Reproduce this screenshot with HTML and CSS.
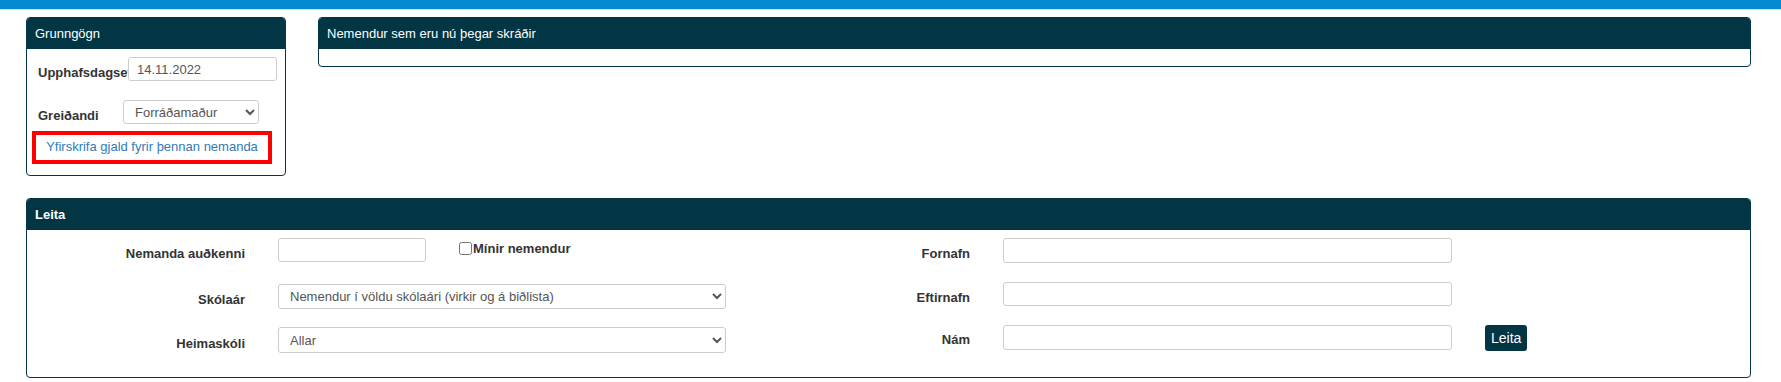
FILE: index.html
```html
<!DOCTYPE html>
<html lang="is">
<head>
    <meta charset="UTF-8">
    <meta name="viewport" content="width=device-width, initial-scale=1.0">
    <title>Skráning nemenda</title>
    <link rel="stylesheet" href="styles.css">
</head>
<body>

    <div class="topbar"></div>

    <div class="page">
        <div class="top-row">
            <section class="panel panel-base">
                <div class="panel-heading">Grunngögn</div>
                <div class="panel-body">
                    <div class="base-row">
                        <label class="base-label base-label-date" for="startdate">Upphafsdagsetning</label>
                        <input type="text" id="startdate" class="field field-date" value="14.11.2022">
                    </div>
                    <div class="base-row base-row-payer">
                        <label class="base-label base-label-payer" for="payer">Greiðandi</label>
                        <select id="payer" class="field field-payer">
                            <option>Forráðamaður</option>
                            <option>Nemandi</option>
                        </select>
                    </div>
                    <div class="override-box">
                        <a href="#" class="override-link">Yfirskrifa gjald fyrir þennan nemanda</a>
                    </div>
                </div>
            </section>

            <section class="panel panel-list">
                <div class="panel-heading">Nemendur sem eru nú þegar skráðir</div>
                <div class="panel-body"></div>
            </section>
        </div>

        <section class="panel panel-search">
            <div class="panel-heading panel-heading-bold">Leita</div>
            <div class="panel-body search-body">
                <div class="search-left">
                    <div class="search-row row-a">
                        <label class="search-label" for="sid">Nemanda auðkenni</label>
                        <input type="text" id="sid" class="field field-id">
                        <label class="check-label"><input type="checkbox" class="check">Mínir nemendur</label>
                    </div>
                    <div class="search-row row-b">
                        <label class="search-label" for="year">Skólaár</label>
                        <select id="year" class="field field-wide field-year">
                            <option>Nemendur í völdu skólaári (virkir og á biðlista)</option>
                        </select>
                    </div>
                    <div class="search-row row-c">
                        <label class="search-label" for="school">Heimaskóli</label>
                        <select id="school" class="field field-wide field-school">
                            <option>Allar</option>
                        </select>
                    </div>
                </div>
                <div class="search-right">
                    <div class="search-row row-d">
                        <label class="search-label search-label-right" for="first">Fornafn</label>
                        <input type="text" id="first" class="field field-name field-first">
                    </div>
                    <div class="search-row row-e">
                        <label class="search-label search-label-right" for="last">Eftirnafn</label>
                        <input type="text" id="last" class="field field-name">
                    </div>
                    <div class="search-row row-f">
                        <label class="search-label search-label-right" for="study">Nám</label>
                        <input type="text" id="study" class="field field-name field-study">
                        <button type="button" class="btn-search">Leita</button>
                    </div>
                </div>
            </div>
        </section>
    </div>

</body>
</html>
```

FILE: styles.css
```css
body {
    margin: 0;
    font-family: "Liberation Sans", Arial, sans-serif;
    font-size: 13px;
    color: #333;
    background: #fff;
}
.topbar {
    height: 9px;
    background-color: #0389cf;
    border-bottom: 1px solid #dfe3e6;
}
.page {
    padding: 7px 30px 0 26px;
}
.top-row {
    display: flex;
    gap: 32px;
    margin-bottom: 22px;
}
.panel {
    border: 1px solid #023645;
    border-radius: 4px;
    background: white;
    overflow: hidden;
}
.panel-heading {
    height: 31px;
    line-height: 31px;
    padding-left: 8px;
    background-color: #023645;
    color: white;
    font-size: 13px;
}
.panel-heading-bold {
    font-weight: bold;
}
.panel-base {
    width: 258px;
}
.panel-list {
    width: 1431px;
    align-self: flex-start;
}
.panel-list .panel-body {
    height: 17px;
}
.panel-base .panel-body {
    padding: 8px 0 11px 5px;
}
.base-row {
    display: flex;
    align-items: center;
    padding-left: 6px;
}
.base-row-payer {
    margin-top: 19px;
}
.base-label {
    font-weight: bold;
    white-space: nowrap;
    overflow: hidden;
    padding-top: 6px;
}
.base-label-date {
    width: 90px;
}
.base-label-payer {
    width: 85px;
}
.field {
    box-sizing: border-box;
    height: 24px;
    border: 1px solid #ccc;
    border-radius: 3px;
    padding: 0 8px;
    font-family: "Liberation Sans", Arial, sans-serif;
    font-size: 13px;
    color: #555;
    background-color: white;
    margin: 0;
}
select.field {
    padding: 0 6px 0 7px;
}
.field-date {
    width: 149px;
}
.field-payer {
    width: 136px;
}
.override-box {
    box-sizing: border-box;
    width: 240px;
    height: 33px;
    margin-top: 7px;
    border: 4px solid #f00;
    text-align: center;
    line-height: 23px;
}
.override-link {
    color: #337ab7;
    text-decoration: none;
    font-size: 13px;
}
.panel-search {
    width: 1723px;
}
.search-body {
    display: flex;
    padding: 8px 0 24px 0;
}
.search-left {
    width: 699px;
}
.search-row {
    display: flex;
    align-items: center;
}
.search-label {
    width: 218px;
    margin-right: 33px;
    text-align: right;
    font-weight: bold;
    padding-top: 6px;
}
.search-label-right {
    width: 244px;
    margin-right: 33px;
}
.field-id {
    width: 148px;
}
.check-label {
    display: flex;
    align-items: center;
    margin-left: 33px;
    margin-bottom: 4px;
    font-weight: bold;
}
.check {
    width: 13px;
    height: 13px;
    margin: 0 1px 0 0;
}
.field-wide {
    width: 448px;
}
.row-b {
    margin-top: 22px;
}
.field-year {
    height: 25px;
}
.row-c {
    margin-top: 18px;
}
.field-school {
    height: 26px;
}
.field-name {
    width: 449px;
}
.field-first {
    height: 25px;
}
.row-e {
    margin-top: 19px;
}
.row-f {
    margin-top: 19px;
    align-items: flex-start;
}
.row-f .search-label {
    padding-top: 7px;
}
.field-study {
    height: 25px;
}
.btn-search {
    height: 26px;
    margin-left: 33px;
    padding: 0 6px;
    background-color: #023645;
    color: white;
    border: none;
    border-radius: 3px;
    font-family: "Liberation Sans", Arial, sans-serif;
    font-size: 14px;
    cursor: pointer;
}
```
